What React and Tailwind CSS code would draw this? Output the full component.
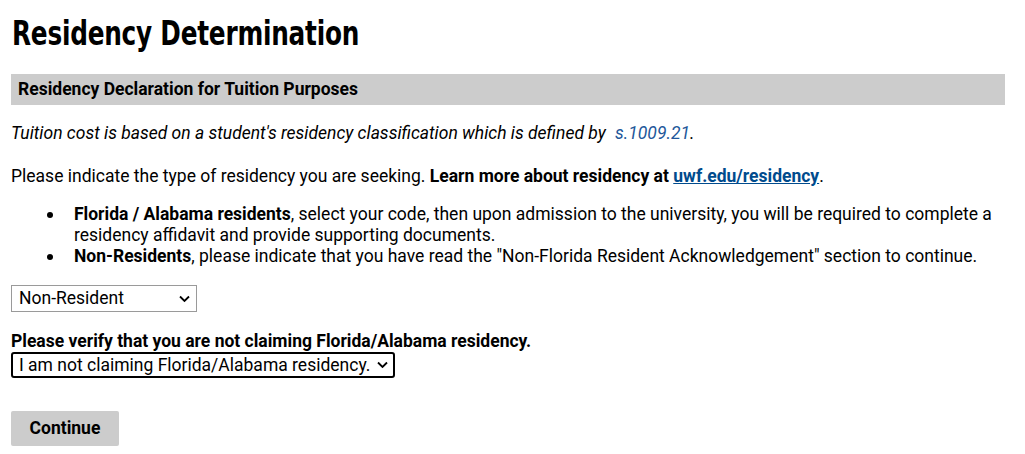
import React, { useState } from "react";

const roboto = "font-['Roboto','Liberation_Sans',sans-serif]";

function Chevron() {
  return (
    <svg
      width="11"
      height="7"
      viewBox="0 0 11 7"
      className="absolute right-[7px] top-1/2 -translate-y-1/2 pointer-events-none"
    >
      <polyline points="1,1 5.5,5.5 10,1" fill="none" stroke="#000" strokeWidth="1.8" />
    </svg>
  );
}

function Bullet() {
  return (
    <span className="w-[30px] shrink-0 pl-[3px] pt-[8px]">
      <span className="block w-[6px] h-[6px] rounded-full bg-black" />
    </span>
  );
}

export default function App() {
  const [residency, setResidency] = useState("NR");
  const [verify, setVerify] = useState("Y");

  return (
    <div className={`${roboto} bg-white text-black min-h-[454px] pl-[11px] pr-[20px] pt-[9px] text-[17.5px] leading-[21px]`}>
      {/* Header */}
      <h1 className="font-['Liberation_Sans_Narrow','DejaVu_Sans_Condensed',sans-serif] font-bold text-[34px] leading-[48px] tracking-[-0.3px] ml-px scale-x-[0.81] origin-left whitespace-nowrap">
        Residency Determination
      </h1>

      <div className="mt-[17px] bg-[#cccccc] h-[31px] flex items-center px-[7px]">
        <h2 className="font-bold text-[17.5px]">Residency Declaration for Tuition Purposes</h2>
      </div>

      <p className="italic mt-[18px]">
        Tuition cost is based on a student's residency classification which is defined by{" "}
        <a href="#" className="text-[#22579a] ml-[5px]">s.1009.21</a>.
      </p>

      <p className="mt-[22px]">
        Please indicate the type of residency you are seeking.{" "}
        <strong className="font-bold">
          Learn more about residency at{" "}
          <a href="#" className="text-[#004b8d] underline">uwf.edu/residency</a>
        </strong>
        .
      </p>

      {/* Residency notes */}
      <ul className="pl-[33px] mt-[17px]">
        <li className="flex">
          <Bullet />
          <span>
            <strong className="font-bold">Florida / Alabama residents</strong>, select your code, then upon admission to the university, you will be required to complete a residency affidavit and provide supporting documents.
          </span>
        </li>
        <li className="flex">
          <Bullet />
          <span>
            <strong className="font-bold">Non-Residents</strong>, please indicate that you have read the "Non-Florida Resident Acknowledgement" section to continue.
          </span>
        </li>
      </ul>

      <div className="mt-[18px]">
        <div className="relative inline-block">
          <select
            value={residency}
            onChange={(e) => setResidency(e.target.value)}
            className="appearance-none block w-[186px] h-[27px] border border-[#9a9a9a] bg-white pl-[7px] text-[17.5px] outline-none"
          >
            <option value="">Select...</option>
            <option value="FL">Florida Resident</option>
            <option value="AL">Alabama Resident</option>
            <option value="NR">Non-Resident</option>
          </select>
          <Chevron />
        </div>
      </div>

      <label className="block font-bold mt-[19px]">
        Please verify that you are not claiming Florida/Alabama residency.
      </label>
      <div className="relative inline-block">
        <select
          value={verify}
          onChange={(e) => setVerify(e.target.value)}
          className="appearance-none block w-[384px] h-[26px] border-2 border-black rounded-[3px] bg-white pl-[6px] text-[17.5px] outline-none"
        >
          <option value="Y">I am not claiming Florida/Alabama residency.</option>
        </select>
        <Chevron />
      </div>

      <div className="mt-[33px]">
        <button className="bg-[#cccccc] rounded-[2px] w-[108px] h-[35px] font-bold text-[17.5px]">
          Continue
        </button>
      </div>
    </div>
  );
}
